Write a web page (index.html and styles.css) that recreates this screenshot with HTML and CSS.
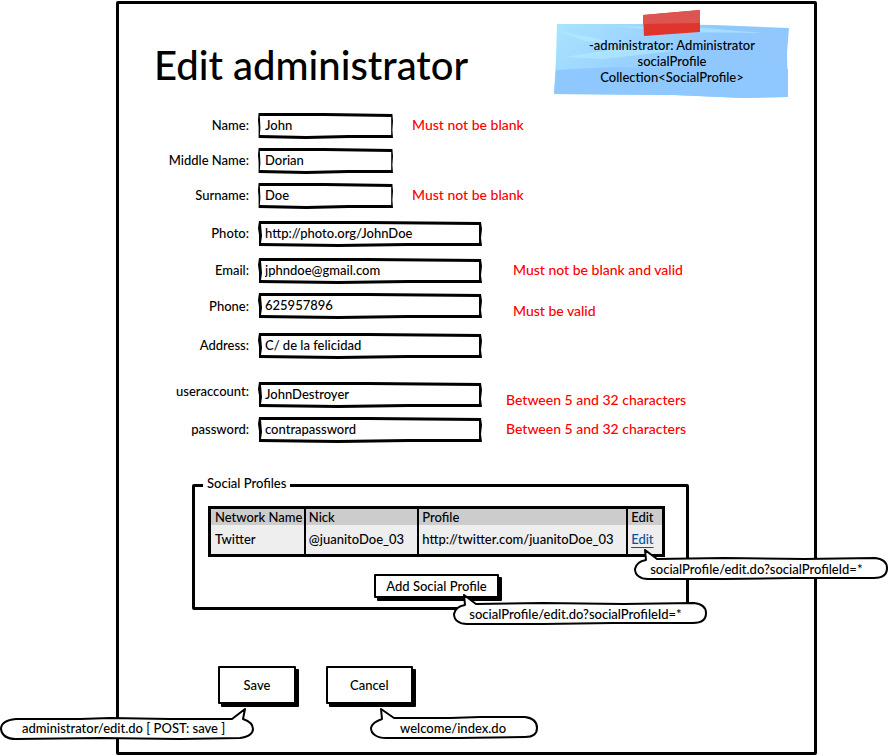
FILE: index.html
```html
<!DOCTYPE html>
<html lang="en">
<head>
<meta charset="utf-8">
<title>Edit administrator</title>
<link rel="stylesheet" href="styles.css">
</head>
<body>
<main class="frame">
  <header class="top">
    <h1>Edit administrator</h1>
    <aside class="note">
      <svg class="note-paper" viewBox="0 0 236 76" preserveAspectRatio="none" aria-hidden="true">
        <defs>
          <linearGradient id="paper" x1="0" y1="0" x2="1" y2=".35">
            <stop offset="0" stop-color="#a9e4ff"/>
            <stop offset=".35" stop-color="#9dd5ff"/>
            <stop offset=".65" stop-color="#90c8fe"/>
          </linearGradient>
        </defs>
        <path d="M3 1L90 1L160 2L235 5L233 30L234 74L190 75L120 72L0 71L2 35Z" fill="url(#paper)"/>
        <path d="M2 47L60 44L130 46L180 43L234 46L234 74L190 75L120 72L0 71Z" fill="#8fc8fe"/>
        <path d="M5 8L45 16L60 20L30 18ZM10 34L75 24L120 28L50 36ZM60 3L150 5L210 10L120 9Z" fill="#b5ebff" opacity=".6"/>
      </svg>
      <svg class="tape" viewBox="0 0 60 28" aria-hidden="true">
        <path d="M1 6L58 1L58 23L2 27Z" fill="#e0352c"/>
        <path d="M1 6L58 1L58 14L1 15Z" fill="#dd5550"/>
      </svg>
      <p>-administrator: Administrator<br>socialProfile<br>Collection&lt;SocialProfile&gt;</p>
    </aside>
  </header>

  <form>
    <div class="row"><label for="name">Name:</label><input class="short" id="name" type="text" value="John"><span class="error">Must not be blank</span></div>
    <div class="row"><label for="middle">Middle Name:</label><input class="short" id="middle" type="text" value="Dorian"></div>
    <div class="row"><label for="surname">Surname:</label><input class="short" id="surname" type="text" value="Doe"><span class="error">Must not be blank</span></div>
    <div class="row medium"><label for="photo">Photo:</label><input id="photo" type="text" value="http://photo.org/JohnDoe"></div>
    <div class="row medium"><label for="email">Email:</label><input id="email" type="text" value="jphndoe@gmail.com"><span class="error far">Must not be blank and valid</span></div>
    <div class="row"><label class="level" for="phone">Phone:</label><input id="phone" type="text" value="625957896"><span class="error far low">Must be valid</span></div>
    <div class="row loose"><label for="address">Address:</label><input id="address" type="text" value="C/ de la felicidad"></div>
    <div class="row section"><label class="high" for="account">useraccount:</label><input id="account" type="text" value="JohnDestroyer"><span class="error mid low">Between 5 and 32 characters</span></div>
    <div class="row"><label for="password">password:</label><input id="password" type="text" value="contrapassword"><span class="error mid">Between 5 and 32 characters</span></div>

    <fieldset>
      <legend>Social Profiles</legend>
      <table>
        <colgroup><col class="c-network"><col class="c-nick"><col class="c-profile"><col class="c-edit"></colgroup>
        <thead><tr><th>Network Name</th><th>Nick</th><th>Profile</th><th>Edit</th></tr></thead>
        <tbody><tr>
          <td>Twitter</td><td>@juanitoDoe_03</td><td>http://twitter.com/juanitoDoe_03</td>
          <td><span class="anchor"><a href="#edit">Edit</a>
            <span class="callout at-link"><svg width="254" height="33" viewBox="0 0 254 33" aria-hidden="true"><path d="M11 2L23 11L90 10L170 11L241 10C249 11 253 15 253 20C253 27 249 30 240 30L160 30L90 31L14 31C6 31 1 27 1 21C2 16 6 13 12 12Z"/></svg><span>socialProfile/edit.do?socialProfileId=*</span></span></span></td>
        </tr></tbody>
      </table>
      <div class="add"><span class="anchor"><button class="small" type="button">Add Social Profile</button>
        <span class="callout at-add"><svg width="254" height="33" viewBox="0 0 254 33" aria-hidden="true"><path d="M11 2L23 11L90 10L170 11L241 10C249 11 253 15 253 20C253 27 249 30 240 30L160 30L90 31L14 31C6 31 1 27 1 21C2 16 6 13 12 12Z"/></svg><span>socialProfile/edit.do?socialProfileId=*</span></span></span></div>
    </fieldset>

    <div class="actions">
      <span class="anchor"><button type="submit">Save</button>
        <span class="callout at-save"><svg width="255" height="33" viewBox="0 0 255 33" aria-hidden="true"><path d="M245 2L232 12L170 12L110 11L80 12L16 12C6 13 1 17 1 22C2 29 8 32 16 32L100 31L180 32L240 31C249 30 253 26 253 22C253 17 249 14 243 12Z"/></svg><span>administrator/edit.do [ POST: save ]</span></span></span>
      <span class="anchor"><button type="button">Cancel</button>
        <span class="callout at-cancel"><svg width="169" height="33" viewBox="0 0 169 33" aria-hidden="true"><path d="M11 2L24 11L80 11L110 10L155 10C163 11 167 15 167 21C167 27 163 30 155 30L90 31L16 31C7 31 1 27 1 21C2 16 6 14 12 12Z"/></svg><span>welcome/index.do</span></span></span>
    </div>
  </form>
</main>
</body>
</html>
```
FILE: styles.css
```css
* { box-sizing: border-box; }

body {
  margin: 0;
  background: #fff;
  color: #000;
  font: 500 13px/16px Lato, "Noto Sans", sans-serif;
}

.frame {
  margin: 1px 72px 2px 116px;
  padding-bottom: 48px;
  border: 3px solid #000;
  border-radius: 2px;
}

.top {
  display: flex;
  justify-content: space-between;
  padding: 19px 24px 0 35px;
}

h1 {
  margin: 22px 0 0;
  font-size: 40px;
  line-height: 40px;
  font-weight: 500;
}

.note {
  position: relative;
  width: 236px;
  height: 76px;
  padding-top: 14px;
  text-align: center;
}

.note p { position: relative; margin: 0; }

.note-paper {
  position: absolute;
  inset: 0;
  width: 100%;
  height: 100%;
}

.tape {
  position: absolute;
  top: -14px;
  left: 88px;
  width: 60px;
  height: 28px;
}

form { margin-top: 14px; }

.row {
  display: flex;
  align-items: center;
  margin-top: 9px;
}
.row:first-child { margin-top: 0; }
.medium { margin-top: 12px; }
.medium + .medium { margin-top: 11px; }
.loose { margin-top: 14px; }
.section { margin-top: 23px; }

label {
  width: 130px;
  margin-right: 9px;
  padding-bottom: 2px;
  text-align: right;
}
.level { padding-bottom: 0; }
.high { align-self: flex-start; padding-top: 1px; }

input {
  width: 224px;
  height: 26px;
  padding: 0 7px 2px;
  border: 0;
  font: inherit;
  color: inherit;
  background: url("data:image/svg+xml,%3Csvg xmlns='http://www.w3.org/2000/svg' viewBox='0 0 224 26' preserveAspectRatio='none'%3E%3Cpath d='M1 0L110 0L223 1L224 8L223 17L224 25L150 25L80 26L1 25L1 14L0 7ZM3 3L4 15L3 22L80 23L150 22L221 22L221 17L221 8L221 4L110 3Z' fill-rule='evenodd'/%3E%3C/svg%3E") 0 0 / 100% 100% no-repeat;
}
.short { width: 135px; }

.error {
  margin-left: 19px;
  padding-bottom: 2px;
  color: #f00;
  font-size: 14px;
}
.mid { margin-left: 24px; }
.far { margin-left: 31px; }
.low { align-self: flex-end; padding-bottom: 0; }

fieldset {
  margin: 32px 125px 0 73px;
  padding: 11px 21px 9px 13px;
  border: 3px solid #000;
  border-radius: 2px;
}

legend { padding: 0 4px 4px; margin-left: -5px; }

table {
  width: 100%;
  table-layout: fixed;
  border-collapse: collapse;
  border: 3px solid #000;
}
.c-network { width: 21%; }
.c-nick { width: 25%; }
.c-profile { width: 46%; }
.c-edit { width: 8%; }

th, td {
  padding: 0 0 0 4px;
  border-left: 2px solid #000;
  text-align: left;
  white-space: nowrap;
  font-weight: inherit;
}
th:not(:first-child), td:not(:first-child) { padding-left: 3px; }
th { background: #ccc; }
td { height: 30px; background: #eee; }

a { color: #0b539b; text-underline-offset: 3px; }

.anchor { position: relative; display: inline-block; }

.add { margin-top: 17px; text-align: center; }

button {
  display: block;
  height: 38px;
  min-width: 78px;
  padding: 0 22px;
  border: 2px solid #000;
  border-radius: 1px;
  background: #fff;
  box-shadow: 3px 3px 0 #000;
  font: inherit;
  color: inherit;
}
.small { height: 24px; padding: 0 10px; }

.actions {
  display: flex;
  gap: 30px;
  margin: 56px 0 0 99px;
}

.callout {
  position: absolute;
  z-index: 1;
  display: grid;
  align-items: center;
  text-align: left;
  white-space: nowrap;
}
.callout > * { grid-area: 1 / 1; }
.callout > span { padding: 9px 0 0 16px; }
.callout svg { display: block; }
.callout path { fill: #fff; stroke: #000; stroke-width: 2; stroke-linejoin: round; }
.at-link { top: 17px; left: 3px; }
.at-add { top: 19px; left: 79px; }
.at-save { top: 41px; left: -218px; }
.at-save > span { padding-left: 22px; }
.at-cancel { top: 41px; left: 44px; }
.at-cancel > span { padding-left: 30px; }
```
